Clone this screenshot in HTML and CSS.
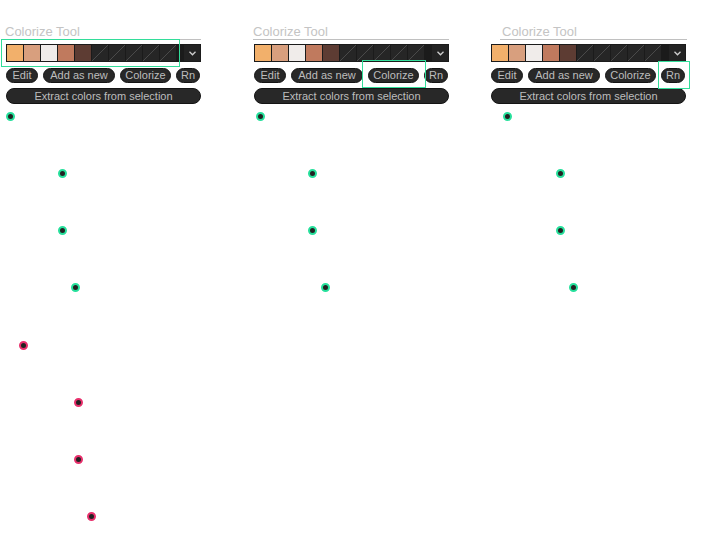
FILE: index.html
```html
<!DOCTYPE html>
<html>
<head>
<meta charset="utf-8">
<link rel="stylesheet" href="styles.css">
</head>
<body>
<div class="page">
  <div class="panels">
    <div class="panel p1">
      <div class="title">Colorize Tool</div>
      <div class="palette">
        <div class="sw" style="background:#f2b06b"></div>
        <div class="sw" style="background:#d89f7e"></div>
        <div class="sw" style="background:#f0ecea"></div>
        <div class="sw" style="background:#c07a5e"></div>
        <div class="sw" style="background:#5d3c33"></div>
        <div class="sw empty"></div><div class="sw empty"></div><div class="sw empty"></div><div class="sw empty"></div><div class="sw empty"></div>
        <div class="drop"><svg width="7" height="5" viewBox="0 0 7 5"><polyline points="0.5,0.8 3.5,3.8 6.5,0.8" fill="none" stroke="#cfcfcf" stroke-width="1.3"/></svg></div>
      </div>
      <div class="row">
        <span class="btn w-edit">Edit</span>
        <span class="btn w-add">Add as new</span>
        <span class="btn w-col">Colorize</span>
        <span class="btn w-rn">Rn</span>
      </div>
      <div class="btn wide">Extract colors from selection</div>
    </div>
    <div class="panel p2">
      <div class="title">Colorize Tool</div>
      <div class="palette">
        <div class="sw" style="background:#f2b06b"></div>
        <div class="sw" style="background:#d89f7e"></div>
        <div class="sw" style="background:#f0ecea"></div>
        <div class="sw" style="background:#c07a5e"></div>
        <div class="sw" style="background:#5d3c33"></div>
        <div class="sw empty"></div><div class="sw empty"></div><div class="sw empty"></div><div class="sw empty"></div><div class="sw empty"></div>
        <div class="drop"><svg width="7" height="5" viewBox="0 0 7 5"><polyline points="0.5,0.8 3.5,3.8 6.5,0.8" fill="none" stroke="#cfcfcf" stroke-width="1.3"/></svg></div>
      </div>
      <div class="row">
        <span class="btn w-edit">Edit</span>
        <span class="btn w-add">Add as new</span>
        <span class="btn w-col">Colorize</span>
        <span class="btn w-rn">Rn</span>
      </div>
      <div class="btn wide">Extract colors from selection</div>
    </div>
    <div class="panel p3">
      <div class="title">Colorize Tool</div>
      <div class="palette">
        <div class="sw" style="background:#f2b06b"></div>
        <div class="sw" style="background:#d89f7e"></div>
        <div class="sw" style="background:#f0ecea"></div>
        <div class="sw" style="background:#c07a5e"></div>
        <div class="sw" style="background:#5d3c33"></div>
        <div class="sw empty"></div><div class="sw empty"></div><div class="sw empty"></div><div class="sw empty"></div><div class="sw empty"></div>
        <div class="drop"><svg width="7" height="5" viewBox="0 0 7 5"><polyline points="0.5,0.8 3.5,3.8 6.5,0.8" fill="none" stroke="#cfcfcf" stroke-width="1.3"/></svg></div>
      </div>
      <div class="row">
        <span class="btn w-edit">Edit</span>
        <span class="btn w-add">Add as new</span>
        <span class="btn w-col">Colorize</span>
        <span class="btn w-rn">Rn</span>
      </div>
      <div class="btn wide">Extract colors from selection</div>
    </div>
  </div>

  <div class="hl" style="left:1px;top:39px;width:179px;height:28px"></div>
  <div class="hl" style="left:362px;top:60px;width:64px;height:28px"></div>
  <div class="hl" style="left:658px;top:61px;width:32px;height:28px"></div>

  <div class="dot g" style="left:10px;top:116px"></div>
  <div class="dot g" style="left:62px;top:173px"></div>
  <div class="dot g" style="left:62px;top:230px"></div>
  <div class="dot g" style="left:75px;top:287px"></div>
  <div class="dot r" style="left:23px;top:345px"></div>
  <div class="dot r" style="left:78px;top:402px"></div>
  <div class="dot r" style="left:78px;top:459px"></div>
  <div class="dot r" style="left:91px;top:516px"></div>

  <div class="dot g" style="left:260px;top:116px"></div>
  <div class="dot g" style="left:312px;top:173px"></div>
  <div class="dot g" style="left:312px;top:230px"></div>
  <div class="dot g" style="left:325px;top:287px"></div>

  <div class="dot g" style="left:507px;top:116px"></div>
  <div class="dot g" style="left:560px;top:173px"></div>
  <div class="dot g" style="left:560px;top:230px"></div>
  <div class="dot g" style="left:573px;top:287px"></div>
</div>
</body>
</html>
```
FILE: styles.css
```css
html, body {
  margin: 0;
  padding: 0;
  background: #ffffff;
}
body {
  width: 705px;
  height: 548px;
  overflow: hidden;
  font-family: "Liberation Sans", Arial, sans-serif;
}
.page {
  position: relative;
  width: 705px;
  height: 548px;
}
.panels {
  display: flex;
  align-items: flex-start;
  padding-top: 23px;
}
.panel {
  width: 195px;
  display: flex;
  flex-direction: column;
}
.p1 { margin-left: 6px; }
.p2 { margin-left: 53px; }
.p3 { margin-left: 42px; }
.title {
  font-size: 13px;
  line-height: 14px;
  padding-top: 2px;
  color: #c4c4c4;
  border-bottom: 1px solid #c0c0c0;
  margin-left: -1px;
  height: 14px;
}
.p3 .title {
  margin-left: 9px;
  padding-left: 2px;
  margin-right: -1px;
}
.palette {
  margin-top: 4px;
  height: 18px;
  background: #1b1b1b;
  display: flex;
  align-items: center;
  padding-left: 1px;
  gap: 1px;
}
.sw {
  width: 16px;
  height: 16px;
  flex: none;
}
.sw.empty {
  background:
    linear-gradient(to bottom right, transparent calc(50% - 0.7px), #4a4a4a calc(50% - 0.2px), #4a4a4a calc(50% + 0.2px), transparent calc(50% + 0.7px)),
    #262626;
}
.drop {
  margin-left: auto;
  margin-right: 1px;
  width: 16px;
  height: 16px;
  background: #232323;
  display: flex;
  align-items: center;
  justify-content: center;
}
.row {
  display: flex;
  gap: 5px;
  margin-top: 6px;
}
.btn {
  box-sizing: border-box;
  height: 15px;
  border-radius: 8px;
  background: #282828;
  border: 1px solid #141414;
  color: #bdbdbd;
  font-size: 11px;
  line-height: 13px;
  text-align: center;
  white-space: nowrap;
  display: block;
}
.w-edit { width: 32px; }
.w-add { width: 72px; }
.w-col { width: 51px; }
.w-rn { width: 24px; }
.btn.wide {
  margin-top: 5px;
  height: 16px;
  line-height: 14px;
  width: 195px;
}
.hl {
  position: absolute;
  box-sizing: border-box;
  border: 1px solid #33dd9a;
}
.dot {
  position: absolute;
  width: 9px;
  height: 9px;
  margin-left: -4.5px;
  margin-top: -4.5px;
  box-sizing: border-box;
  border-radius: 50%;
  background: #222222;
  border: 2px solid #27e09c;
}
.dot.r {
  border-color: #e8306c;
}
```
